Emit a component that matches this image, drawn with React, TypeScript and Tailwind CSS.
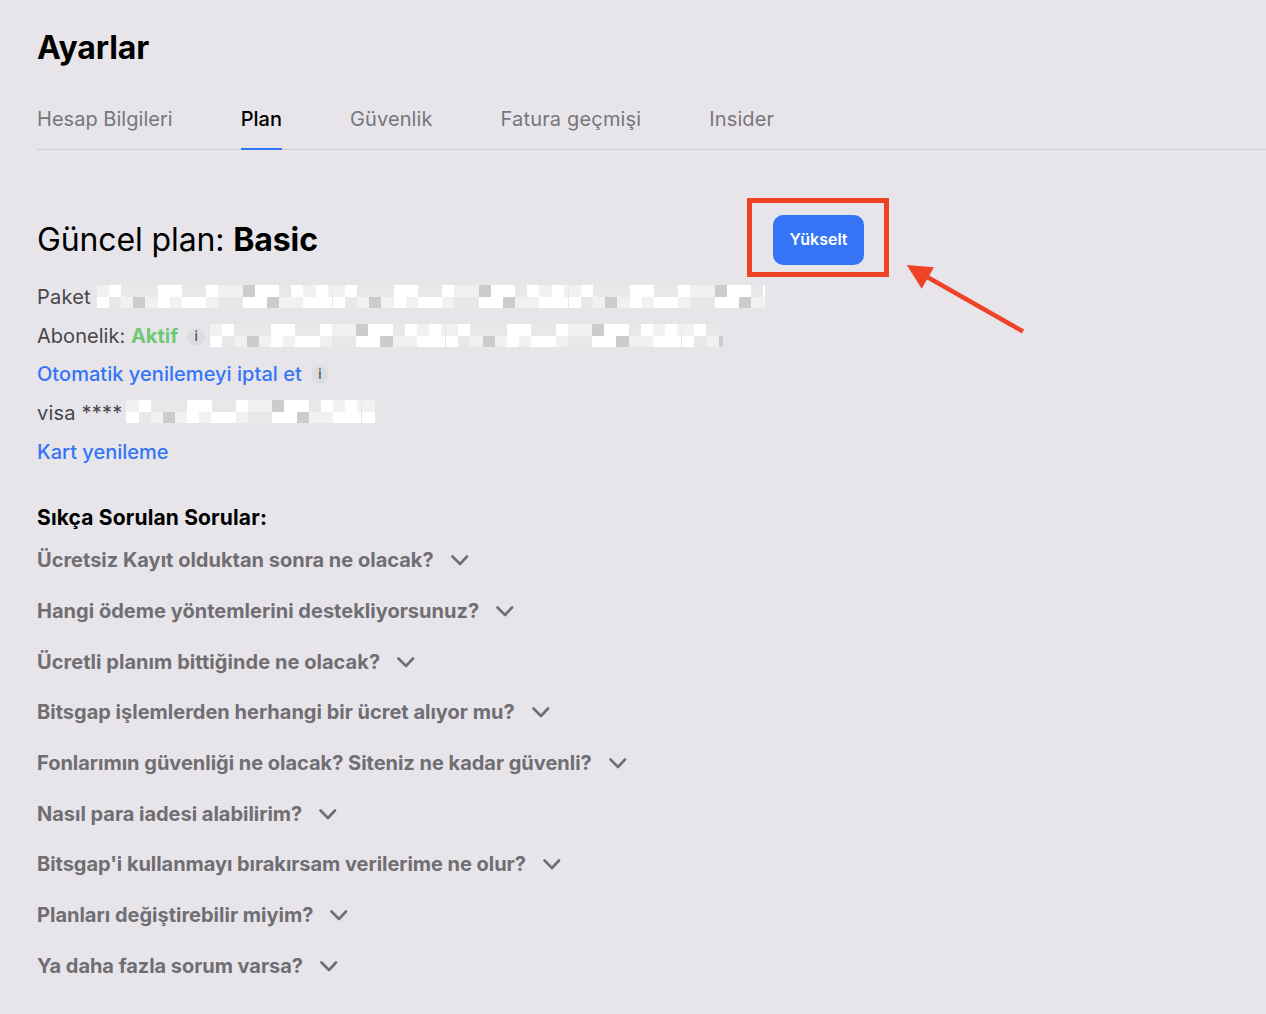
const W = "bg-white", L = "bg-[#f1f1f2]", M = "bg-[#e8e8e9]", D = "bg-[#cccccd]";

const CELL = 12.17 / 12;

const topRow: [string, number][] = [[L,12],[W,12],[M,36],[W,24],[M,24],[W,12],[L,24],[D,12],[W,24],[M,12],[W,12],[L,12],[W,12],[L,4]];
const bottomRow: [string, number][] = [[W,12],[M,12],[L,12],[D,12],[L,12],[W,12],[L,12],[W,24],[L,12],[M,24],[W,24],[D,12],[L,24],[W,28]];

function Tile() {
  return (
    <div className="flex flex-col shrink-0 w-[236px]">
      {[topRow, bottomRow].map((row, r) => (
        <div key={r} className="flex h-[11.5px]">
          {row.map(([c, w], i) => (
            <div key={i} className={c} style={{ width: w * CELL }} />
          ))}
        </div>
      ))}
    </div>
  );
}

function Mosaic({ className }: { className: string }) {
  return (
    <div className={`flex h-[23px] overflow-hidden ${className}`}>
      <Tile /><Tile /><Tile />
    </div>
  );
}

function Info() {
  return (
    <span className="flex items-center justify-center w-[18px] h-[18px] rounded-full bg-[#dcdde0] text-[13px] font-medium text-[#4a4b55] leading-none">
      i
    </span>
  );
}

const faqs: [string, string][] = [
  ["Ücretsiz Kayıt olduktan sonra ne olacak?", ""],
  ["Hangi ödeme yöntemlerini destekliyorsunuz?", "tracking-[0.02px]"],
  ["Ücretli planım bittiğinde ne olacak?", "tracking-[0.05px]"],
  ["Bitsgap işlemlerden herhangi bir ücret alıyor mu?", ""],
  ["Fonlarımın güvenliği ne olacak? Siteniz ne kadar güvenli?", "tracking-[-0.02px]"],
  ["Nasıl para iadesi alabilirim?", "tracking-[-0.02px]"],
  ["Bitsgap'i kullanmayı bırakırsam verilerime ne olur?", "tracking-[-0.05px]"],
  ["Planları değiştirebilir miyim?", ""],
  ["Ya daha fazla sorum varsa?", "tracking-[-0.04px]"],
];

const tabs: [string, string][] = [
  ["Hesap Bilgileri", "tracking-[0.03px] text-[#77767b]"],
  ["Plan", "font-medium text-black border-b-2 border-[#3375f6]"],
  ["Güvenlik", "tracking-[0.1px] text-[#77767b]"],
  ["Fatura geçmişi", "tracking-[0.17px] text-[#77767b]"],
  ["Insider", "tracking-[0.1px] text-[#77767b]"],
];

export default function App() {
  return (
    <div className="relative h-[1014px] w-[1266px] overflow-hidden bg-[#e7e5ea] pl-[37px] font-['Inter',sans-serif]">
      <h1 className="pt-[28px] text-[32px] leading-[40px] font-bold text-black tracking-[-0.15px]">Ayarlar</h1>

      <div className="mt-[23px] flex gap-[68px] border-b border-[#cfced3] h-[59px]">
        {tabs.map(([t, c]) => (
          <div key={t} className={`h-[59px] pt-[16px] text-[20px] leading-[24px] ${c}`}>
            {t}
          </div>
        ))}
      </div>

      <div className="mt-[65px] flex w-[827px] items-center justify-between">
        <h2 className="text-[32px] leading-[50px] text-black tracking-[-0.12px]">
          Güncel plan: <span className="font-bold">Basic</span>
        </h2>
        <button className="h-[50px] w-[91px] rounded-[10px] bg-[#3375f6] pb-[2px] text-[16px] font-semibold text-white">
          Yükselt
        </button>
      </div>

      <div className="mt-[13px] flex flex-col text-[20px] leading-[39px] text-[#47474b]">
        <div className="flex h-[39px] items-center">
          <span className="tracking-[0.2px]">Paket</span>
          <Mosaic className="mb-[2px] ml-[6px] w-[668px]" />
        </div>
        <div className="flex h-[39px] items-center">
          <span className="tracking-[0.03px]">Abonelik:&nbsp;</span>
          <span className="font-bold text-[#6fc971]">Aktif</span>
          <span className="ml-[9px]"><Info /></span>
          <Mosaic className="mb-[2px] ml-[5px] w-[513px]" />
        </div>
        <div className="flex h-[38px] items-center pb-[1px] text-[#3375f6]">
          <span className="font-medium tracking-[0.04px]">Otomatik yenilemeyi iptal et</span>
          <span className="ml-[9px]"><Info /></span>
        </div>
        <div className="flex h-[38px] items-center">
          <span className="tracking-[0.2px]">visa ****</span>
          <Mosaic className="mb-[3px] ml-[4px] w-[249px]" />
        </div>
        <div className="mt-[1px] h-[39px] font-medium text-[#3375f6]">Kart yenileme</div>
      </div>

      <h3 className="mt-[32px] text-[21px] leading-[28px] font-bold text-black tracking-[0.15px]">Sıkça Sorulan Sorular:</h3>

      <div className="mt-[3px] flex flex-col">
        {faqs.map(([q, c]) => (
          <div key={q} className="flex h-[50.7px] items-center gap-[17px] text-[20px] font-bold text-[#6f6e73]">
            <span className={c}>{q}</span>
            <svg width="18" height="12" viewBox="0 0 18 12" fill="none" stroke="#6f6e73" strokeWidth="2.6" strokeLinecap="round" strokeLinejoin="round">
              <path d="M1.5 2.5 L9 10 L16 2.5" />
            </svg>
          </div>
        ))}
      </div>

      <div className="absolute left-[747px] top-[198px] h-[79px] w-[142px] border-[5px] border-[#ee4327]" />
      <svg className="absolute left-[900px] top-[260px]" width="130" height="80" viewBox="900 260 130 80" fill="none">
        <path d="M1023 331.5 L922 274" stroke="#ee4327" strokeWidth="4.5" />
        <path d="M906.7 265 L934 267.3 L921.7 288.7 Z" fill="#ee4327" />
      </svg>
    </div>
  );
}
